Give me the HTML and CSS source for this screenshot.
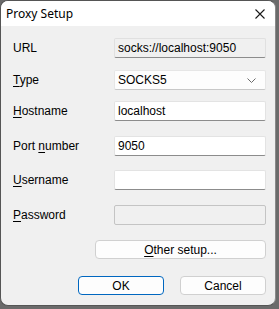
FILE: index.html
```html
<!DOCTYPE html>
<html lang="en">
<head>
  <meta charset="UTF-8">
  <title>Proxy Setup</title>
  <link rel="stylesheet" href="styles.css">
</head>
<body>
  <div class="window">
    <!-- Title bar -->
    <div class="titlebar">
      <span class="title">Proxy Setup</span>
      <svg class="close" width="10" height="10" viewBox="0 0 10 10">
        <path d="M0.5 0.5 L9.5 9.5 M9.5 0.5 L0.5 9.5" stroke="#1a1a1a" stroke-width="1.1" fill="none"/>
      </svg>
    </div>

    <div class="content">
      <div class="row row-url">
        <label class="lbl">URL</label>
        <div class="field readonly">socks://localhost:9050</div>
      </div>

      <div class="row row-type">
        <label class="lbl"><u>T</u>ype</label>
        <div class="field select">
          <span>SOCKS5</span>
          <svg width="9" height="5" viewBox="0 0 9 5">
            <path d="M0.5 0.5 L4.5 4.5 L8.5 0.5" stroke="#6a6a6a" stroke-width="1" fill="none"/>
          </svg>
        </div>
      </div>

      <div class="row row-host">
        <label class="lbl"><u>H</u>ostname</label>
        <div class="field">localhost</div>
      </div>

      <div class="row row-port">
        <label class="lbl">Port <u>n</u>umber</label>
        <div class="field">9050</div>
      </div>

      <div class="row row-user">
        <label class="lbl"><u>U</u>sername</label>
        <div class="field"></div>
      </div>

      <div class="row row-pass">
        <label class="lbl"><u>P</u>assword</label>
        <div class="field disabled"></div>
      </div>

      <div class="other-row">
        <button class="btn btn-other"><u>O</u>ther setup...</button>
      </div>

      <div class="actions">
        <button class="btn btn-ok">OK</button>
        <button class="btn">Cancel</button>
      </div>
    </div>
  </div>
</body>
</html>
```

FILE: styles.css
```css
body {
  margin: 0;
  background-color: #6b6b6b;
  overflow: hidden;
  font-family: "Liberation Sans", Arial, sans-serif;
  font-size: 12px;
  color: #000;
}

.window {
  width: 276px;
  height: 306px;
  background: #f0f0f0;
  border: 1px solid #555;
  border-radius: 8px;
  overflow: hidden;
  box-sizing: border-box;
  border-right-color: #8a8a8a;
}

.titlebar {
  height: 25px;
  background: #fff;
  display: flex;
  align-items: center;
  justify-content: space-between;
  padding: 0 8px 0 5px;
}

.title {
  font-family: "Noto Sans", "Open Sans", sans-serif;
  font-size: 12px;
  color: #000;
  margin-top: -1px;
}

.close {
  margin-right: 2px;
}

.content {
  padding: 12px 9px 0 12px;
}

.row {
  display: flex;
  align-items: center;
}

.lbl {
  width: 101px;
  flex: none;
}

u {
  text-decoration-thickness: 1px;
  text-underline-offset: 2px;
}

.field {
  width: 152px;
  height: 20px;
  box-sizing: border-box;
  background: #fff;
  border: 1px solid #e3e3e3;
  border-bottom-color: #8c8c8c;
  border-radius: 2px;
  padding: 0 3px;
  display: flex;
  align-items: center;
  line-height: 18px;
}

.readonly {
  background: #f0f0f0;
  border-color: #e0e0e0;
  border-bottom-color: #8c8c8c;
}

.select {
  background: #fdfdfd;
  border-color: #e6e6e6;
  border-bottom-color: #c8c8c8;
  justify-content: space-between;
  padding-right: 9px;
}

.disabled {
  background: #f0f0f0;
  border: 1px solid #c4c4c4;
}

.row-type { margin-top: 12px; }
.row-host { margin-top: 11px; }
.row-port { margin-top: 15px; }
.row-user { margin-top: 14px; }
.row-pass { margin-top: 15px; }

.btn {
  font-family: "Liberation Sans", Arial, sans-serif;
  font-size: 12px;
  height: 19px;
  background: #fdfdfd;
  border: 1px solid #d0d0d0;
  border-radius: 4px;
  padding: 0;
  color: #000;
  box-sizing: border-box;
}

.other-row {
  display: flex;
  justify-content: flex-end;
  margin-top: 15px;
}

.btn-other {
  width: 171px;
}

.actions {
  display: flex;
  justify-content: flex-end;
  gap: 16px;
  margin-top: 17px;
}

.actions .btn {
  width: 86px;
}

.btn-ok {
  border-color: #0067c0;
}
```
